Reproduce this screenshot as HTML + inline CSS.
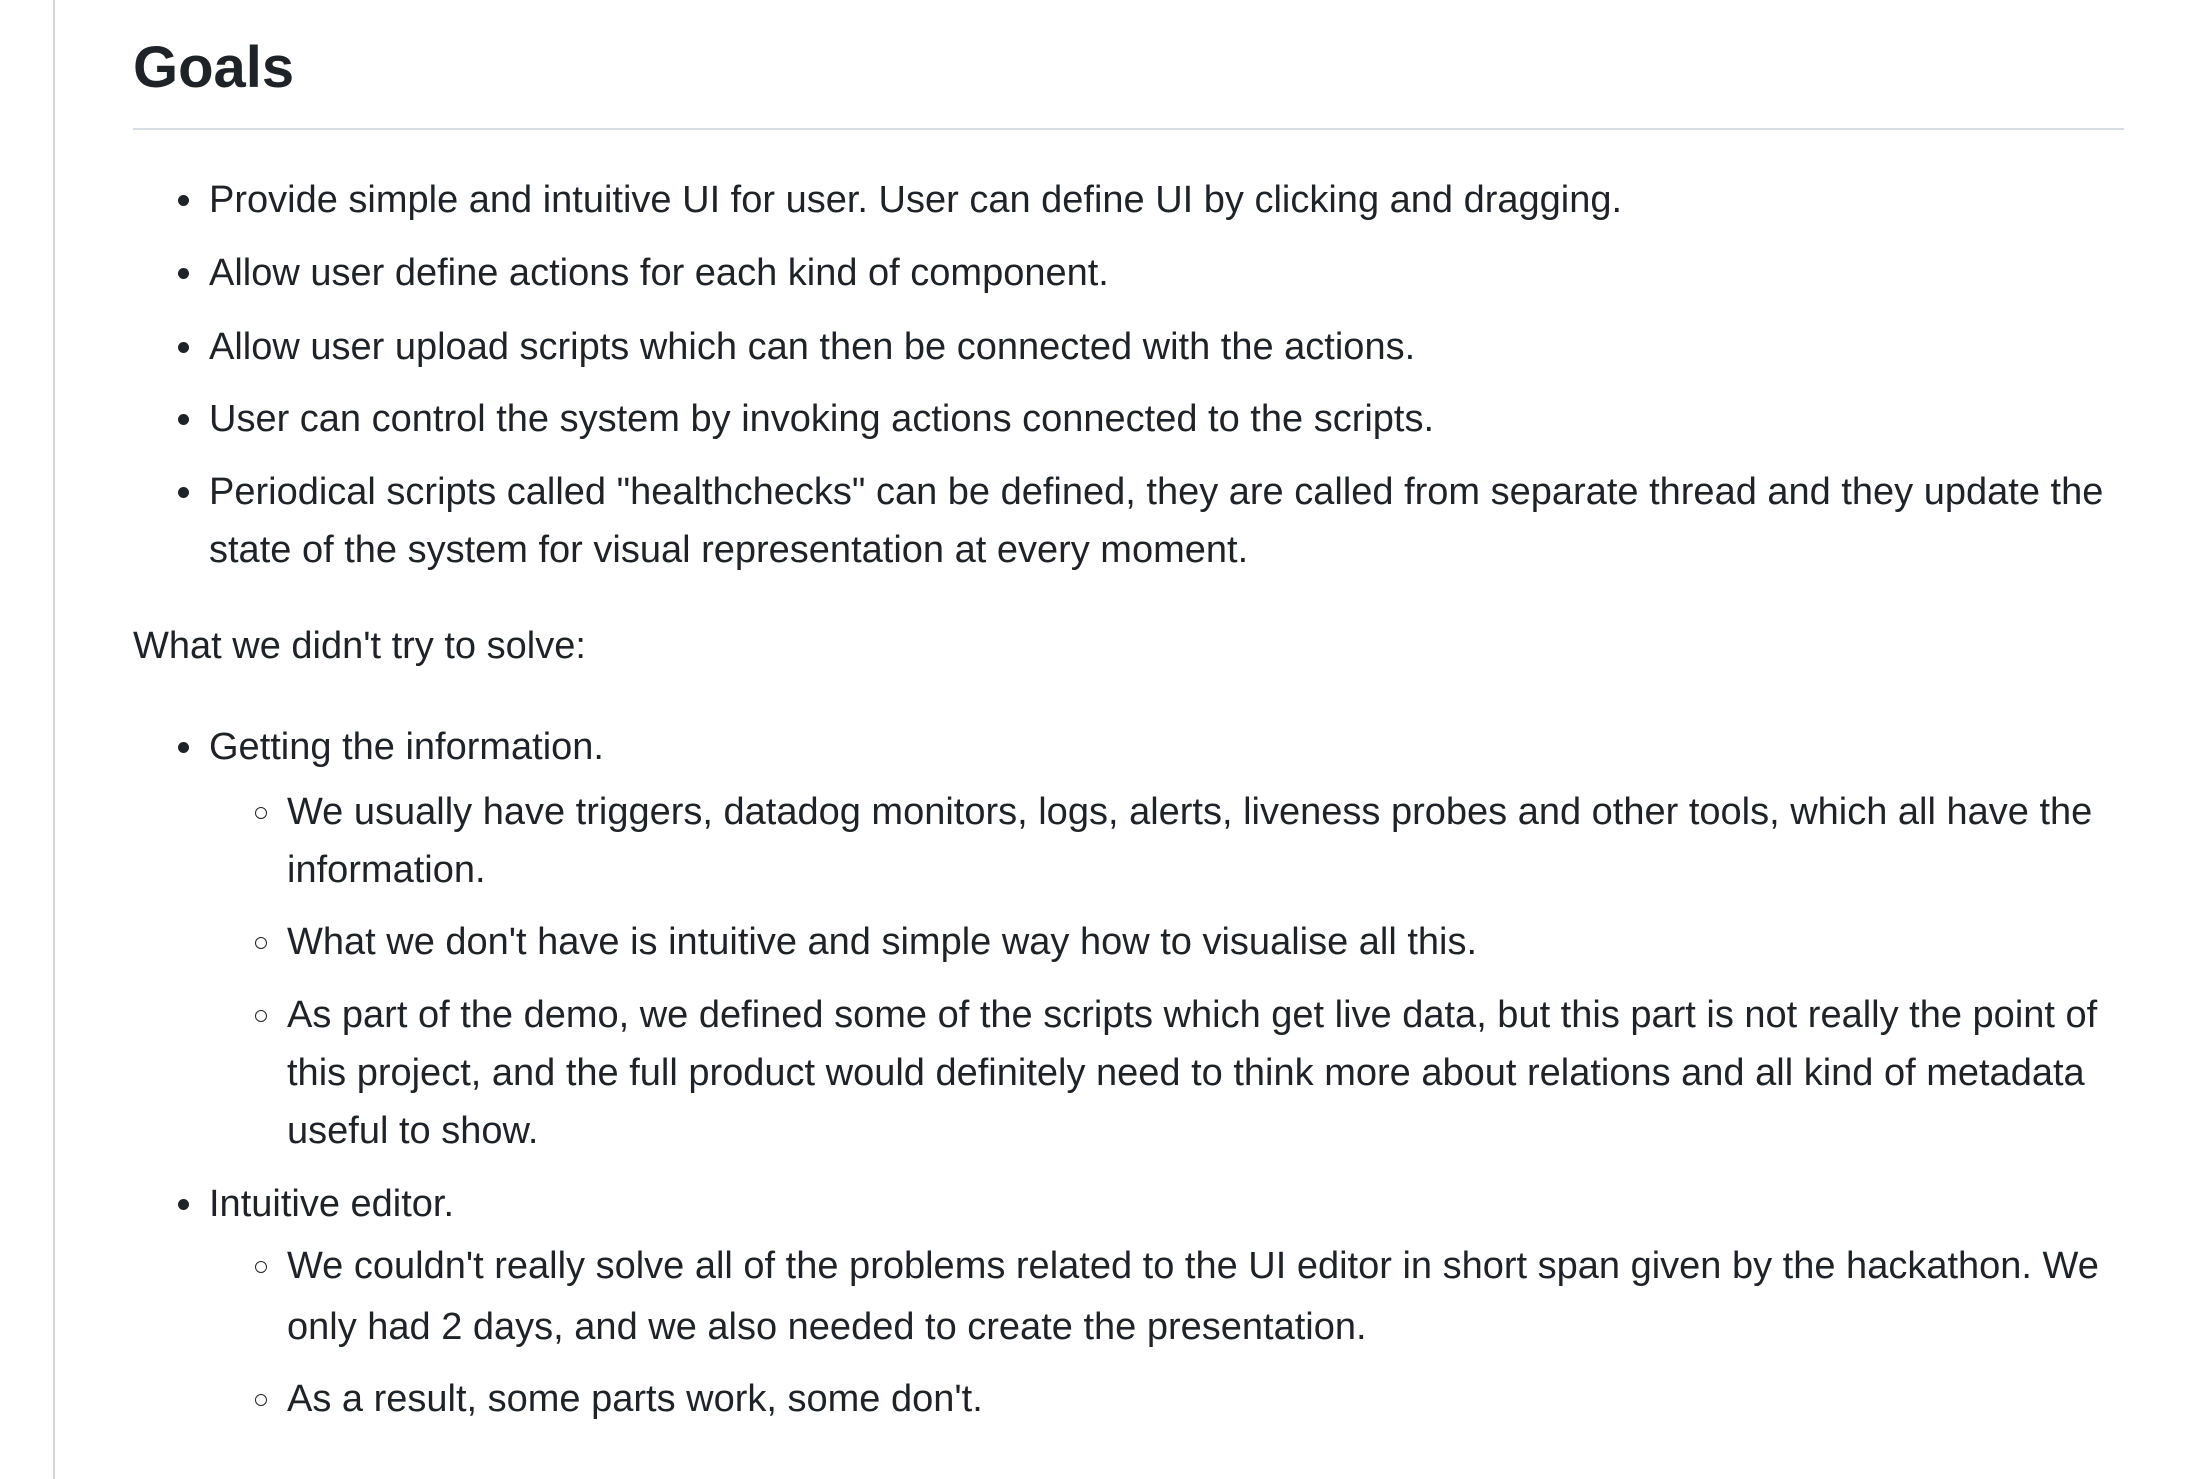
<!DOCTYPE html>
<html><head><meta charset="utf-8"><style>
html,body{margin:0;padding:0;background:#fff;width:2200px;height:1479px;overflow:hidden}
body{font-family:"Liberation Sans",Arial,sans-serif;color:#1f2328;position:relative}
.vl{position:absolute;left:53px;top:0;width:2px;height:1479px;background:#d0d7de}
h2{position:absolute;left:133px;top:33px;margin:0;font-size:58px;font-weight:bold;line-height:70px;color:#1f2328}
.hr{position:absolute;left:133px;top:128px;width:1991px;height:2px;background:#d8dee4}
.l{position:absolute;font-size:38px;line-height:58px;white-space:nowrap}
.d{position:absolute;width:11px;height:11px;border-radius:50%;background:#1f2328}
.c{position:absolute;width:12px;height:12px;border-radius:50%;border:1.5px solid #1f2328;box-sizing:border-box}
</style></head><body>
<div class="vl"></div>
<h2>Goals</h2>
<div class="hr"></div>

<div class="d" style="left:178px;top:195px"></div><div class="l" style="left:209px;top:171px">Provide simple and intuitive UI for user. User can define UI by clicking and dragging.</div>
<div class="d" style="left:178px;top:268px"></div><div class="l" style="left:209px;top:244px">Allow user define actions for each kind of component.</div>
<div class="d" style="left:178px;top:342px"></div><div class="l" style="left:209px;top:318px">Allow user upload scripts which can then be connected with the actions.</div>
<div class="d" style="left:178px;top:414px"></div><div class="l" style="left:209px;top:390px">User can control the system by invoking actions connected to the scripts.</div>
<div class="d" style="left:178px;top:487px"></div><div class="l" style="left:209px;top:463px">Periodical scripts called "healthchecks" can be defined, they are called from separate thread and they update the</div>
<div class="l" style="left:209px;top:521px">state of the system for visual representation at every moment.</div>

<div class="l" style="left:133px;top:617px">What we didn't try to solve:</div>

<div class="d" style="left:178px;top:742px"></div><div class="l" style="left:209px;top:718px">Getting the information.</div>
<div class="c" style="left:255px;top:807px"></div><div class="l" style="left:287px;top:783px">We usually have triggers, datadog monitors, logs, alerts, liveness probes and other tools, which all have the</div>
<div class="l" style="left:287px;top:841px">information.</div>
<div class="c" style="left:255px;top:937px"></div><div class="l" style="left:287px;top:913px">What we don't have is intuitive and simple way how to visualise all this.</div>
<div class="c" style="left:255px;top:1010px"></div><div class="l" style="left:287px;top:986px">As part of the demo, we defined some of the scripts which get live data, but this part is not really the point of</div>
<div class="l" style="left:287px;top:1044px">this project, and the full product would definitely need to think more about relations and all kind of metadata</div>
<div class="l" style="left:287px;top:1102px">useful to show.</div>
<div class="d" style="left:178px;top:1199px"></div><div class="l" style="left:209px;top:1175px">Intuitive editor.</div>
<div class="c" style="left:255px;top:1261px"></div><div class="l" style="left:287px;top:1237px">We couldn't really solve all of the problems related to the UI editor in short span given by the hackathon. We</div>
<div class="l" style="left:287px;top:1298px">only had 2 days, and we also needed to create the presentation.</div>
<div class="c" style="left:255px;top:1394px"></div><div class="l" style="left:287px;top:1370px">As a result, some parts work, some don't.</div>
</body></html>
